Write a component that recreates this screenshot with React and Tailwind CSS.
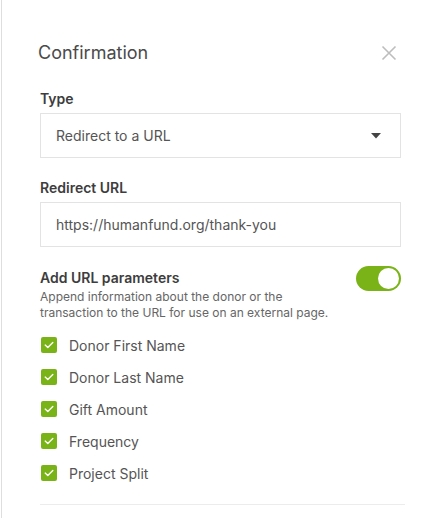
import React from "react";

const items = ["Donor First Name", "Donor Last Name", "Gift Amount", "Frequency", "Project Split"];

function Check() {
  return (
    <span className="flex h-4 w-4 items-center justify-center rounded-[2px] bg-[#7ab317]">
      <svg width="10" height="8" viewBox="0 0 10 8" fill="none">
        <path d="M1.2 4.1 L3.8 6.5 L8.8 1.4" stroke="white" strokeWidth="1.4" strokeLinecap="round" strokeLinejoin="round" />
      </svg>
    </span>
  );
}

export default function App() {
  return (
    <div className="h-[518px] w-[438px] overflow-hidden bg-white pl-px" style={{ fontFamily: "Inter, 'Noto Sans', sans-serif" }}>
      <div className="h-full border-l border-[#dedede] pl-[38px] pr-[37px]">
        <div className="flex items-center justify-between pt-[41px]">
          <h1 className="ml-[-2px] text-[18px] leading-[24px] text-[#4a4a4a]">Confirmation</h1>
          <svg width="16" height="16" viewBox="0 0 16 16" className="mr-[4px]">
            <path d="M1.5 1.5 L14.5 14.5 M14.5 1.5 L1.5 14.5" stroke="#bdbdbd" strokeWidth="1.6" />
          </svg>
        </div>

        <div className="mt-[25px] text-[14px] font-semibold leading-[18px] text-[#3d3d3d]">Type</div>
        <div className="mt-[5px] flex h-[45px] items-center justify-between border border-[#e3e3e3] pl-[15px] pr-[19px] text-[14px] text-[#555]">
          <span>Redirect to a URL</span>
          <svg width="10" height="6" viewBox="0 0 10 6"><path d="M0 0 L10 0 L5 5.5 Z" fill="#444" /></svg>
        </div>

        <div className="mt-[21px] text-[14px] font-semibold leading-[18px] text-[#3d3d3d]">Redirect URL</div>
        <div className="mt-[5px] flex h-[45px] items-center border border-[#e3e3e3] pl-[15px] text-[14px] text-[#555]">
          https://humanfund.org/thank-you
        </div>

        <div className="mt-[22px] flex items-start justify-between">
          <div>
            <div className="text-[14px] font-semibold leading-[18px] text-[#3d3d3d]">Add URL parameters</div>
            <p className="mt-[2px] text-[12px] leading-[16px] text-[#666]">
              Append information about the donor or the
              <br />
              transaction to the URL for use on an external page.
            </p>
          </div>
          <div className="mt-[-3px] flex h-[25px] w-[45px] items-center justify-end rounded-full bg-[#7ab317] pr-[2px]">
            <span className="h-[21px] w-[21px] rounded-full bg-white" />
          </div>
        </div>

        <div className="mt-[8px] flex flex-col">
          {items.map((t) => (
            <div key={t} className="flex h-[32px] items-center gap-[12px] pl-px">
              <Check />
              <span className="text-[14px] text-[#555]">{t}</span>
            </div>
          ))}
        </div>

        <div className="mt-[15px] mr-[-4px] border-t border-[#ececec]" />
      </div>
    </div>
  );
}
